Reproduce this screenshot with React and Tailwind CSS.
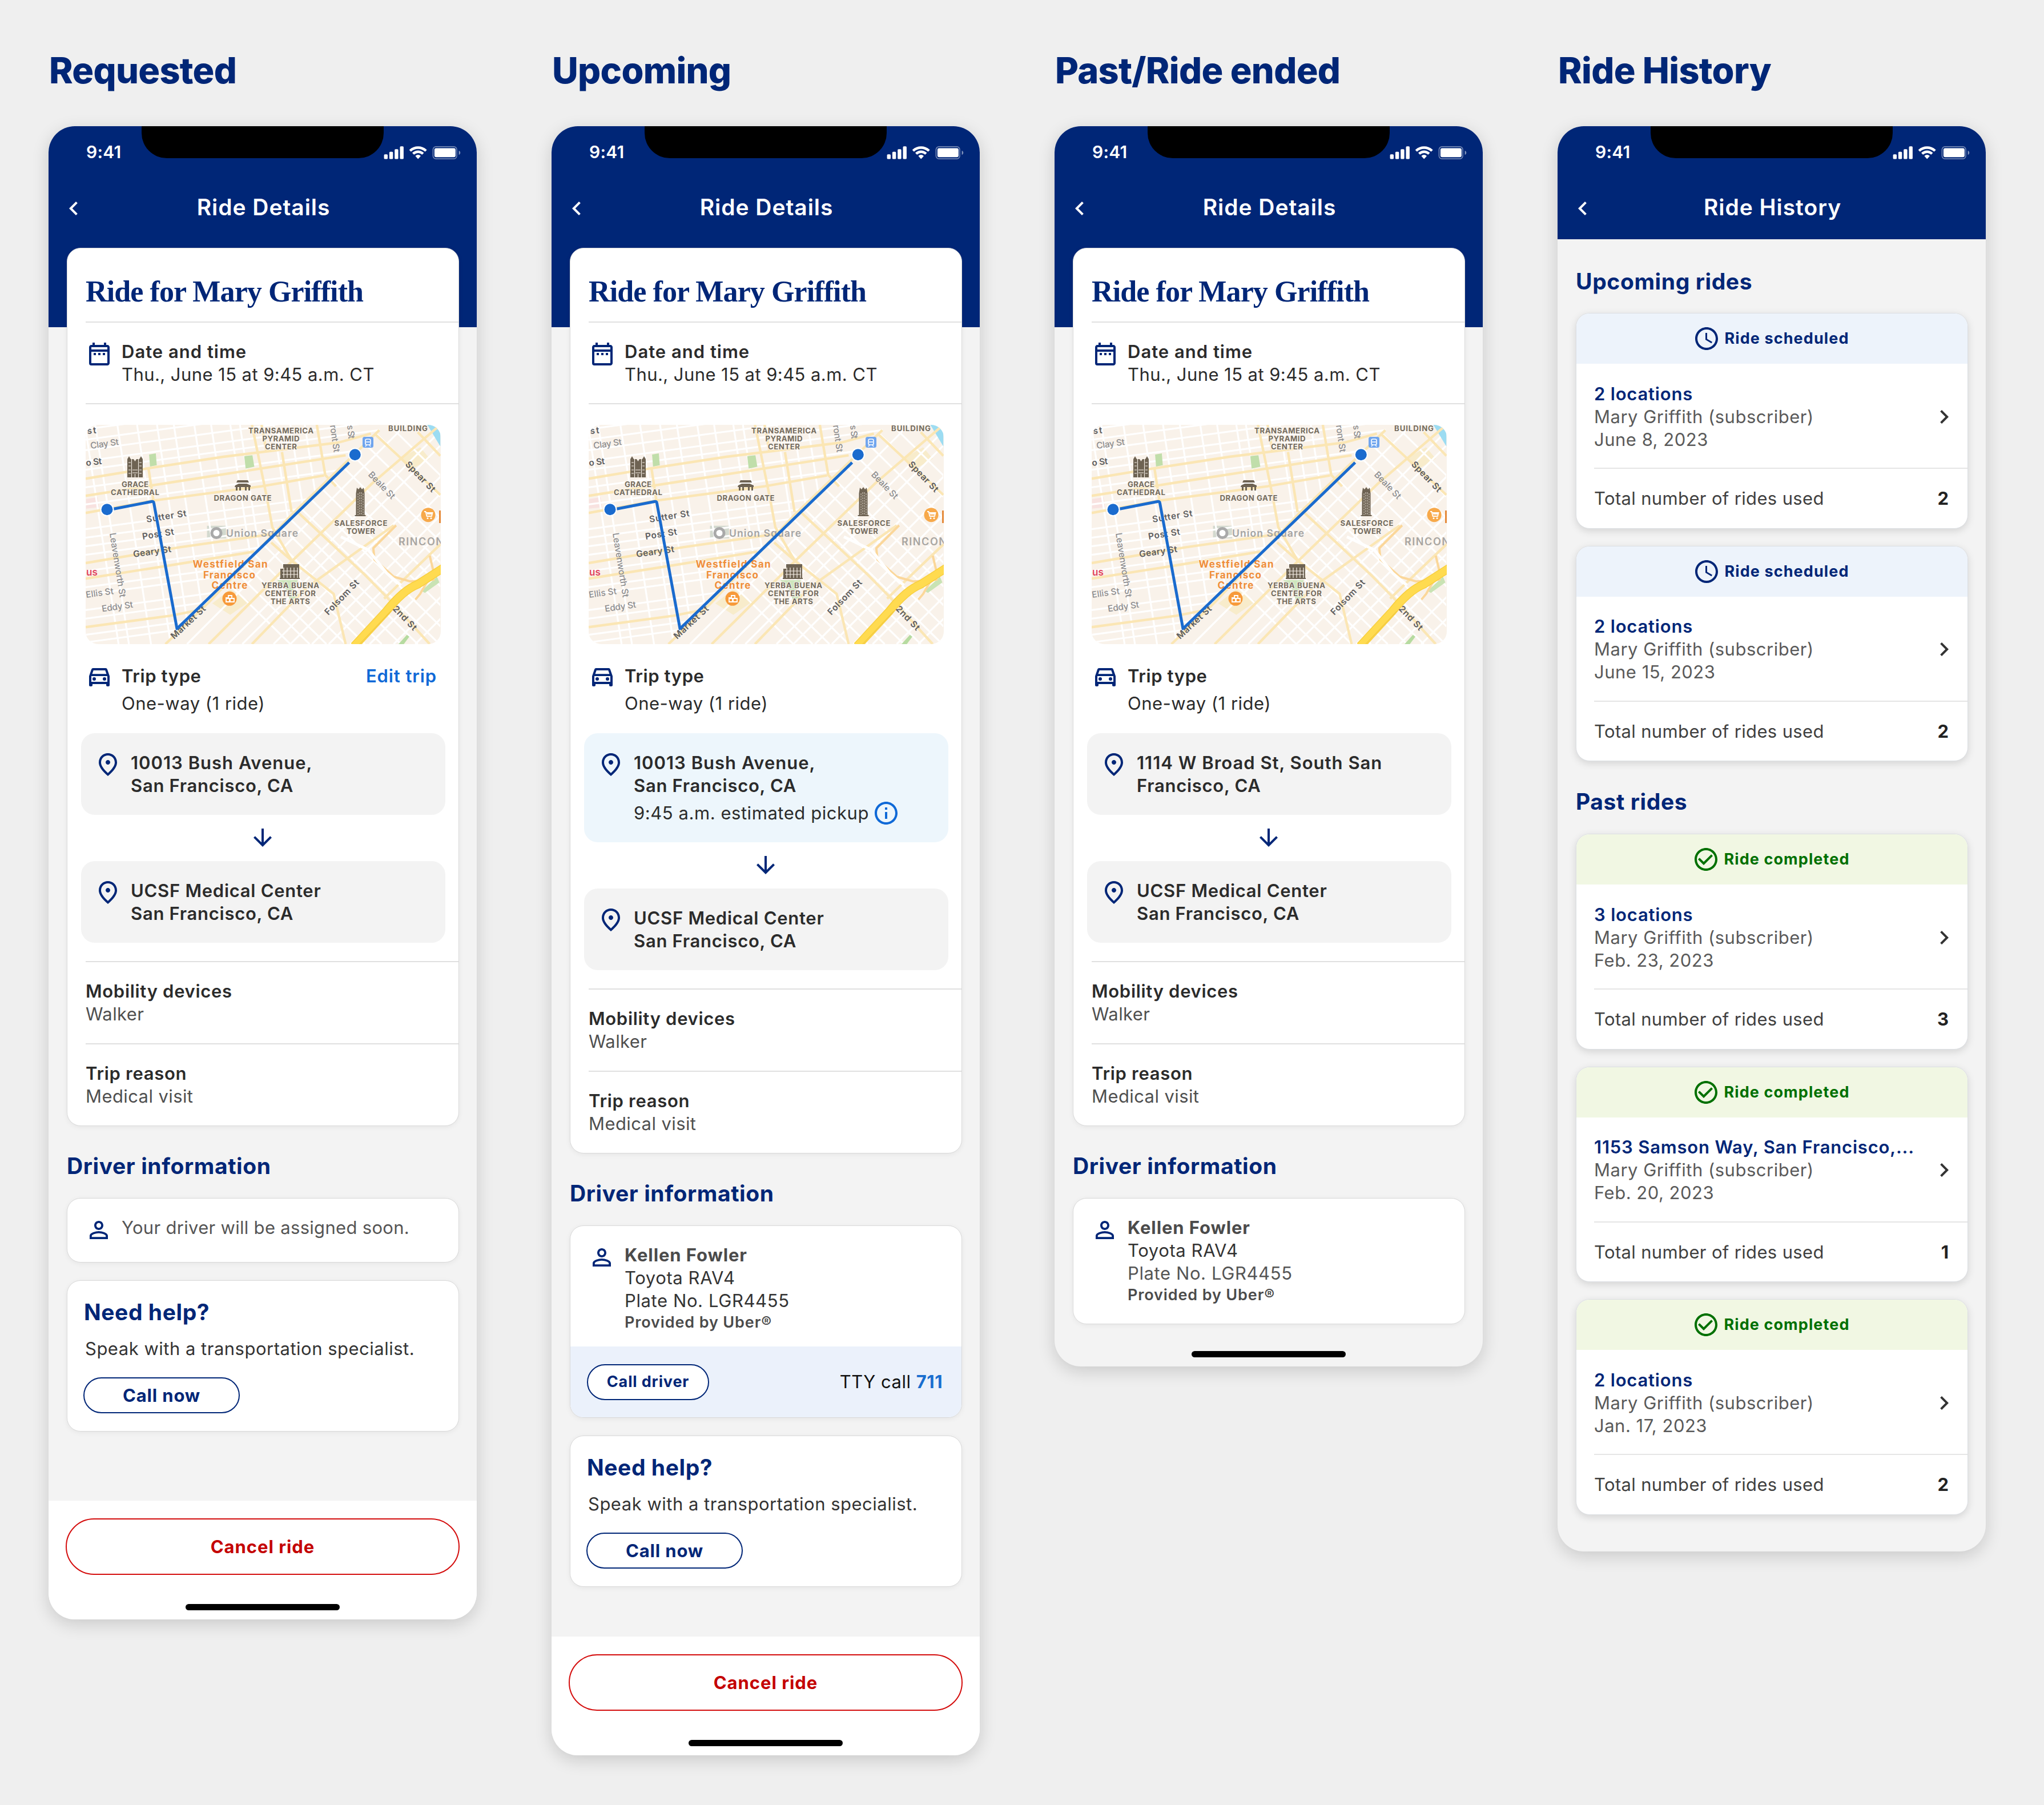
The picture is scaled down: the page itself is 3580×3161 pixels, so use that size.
import React from 'react';
import {
  MdArrowDownward,
  MdCheckCircleOutline,
  MdChevronLeft,
  MdChevronRight,
  MdOutlineDateRange,
  MdOutlineDirectionsCar,
  MdOutlineInfo,
  MdOutlinePlace,
  MdPersonOutline,
  MdSchedule,
} from 'react-icons/md';

const upcomingRides = [
  { title: '2 locations', date: 'June 8, 2023', used: 2 },
  { title: '2 locations', date: 'June 15, 2023', used: 2 },
];

const pastRides = [
  { title: '3 locations', date: 'Feb. 23, 2023', used: 3 },
  { title: '1153 Samson Way, San Francisco,...', date: 'Feb. 20, 2023', used: 1 },
  { title: '2 locations', date: 'Jan. 17, 2023', used: 2 },
];

// Streets share one coordinate space, scaled down by the group that draws them
const yellowStreets = [
  'M48 355L300 302L620 240L1100 165L1235 118',
  'M48 445L400 375L760 305L1130 232',
  'M48 535L330 470L780 395L1040 338',
  'M48 798L440 715L830 645',
  'M48 880L400 810L750 738',
  'M48 1135L400 1075L520 1045',
  'M310 305L330 470',
  'M740 72L800 440L825 610L905 785',
  'M780 72L800 210',
  'M865 215L905 530',
  'M1010 72L1045 335L1090 395',
  'M380 1224L560 1005L905 545L1270 100',
  'M560 1224L655 1105L905 790L1240 380L1524 72',
  'M740 1224L970 925L1330 600',
  'M820 690L905 785L1080 960L1130 1224',
  'M930 530L1210 860L1300 975L1480 1224',
  'M1250 118L1524 440',
  'M1430 110L1524 235',
  'M1290 985L1400 850L1524 700',
];

const whiteRows = [95, 150, 205, 262, 308, 400, 490, 620, 665, 710, 755, 840, 925, 965, 1045, 1090, 1175, 1215, 1290, 1350];
const whiteColumns = [45, 88, 180, 262, 345, 415, 500, 570, 650, 690, 830, 900, 960];
const southNorthEast = [470, 640, 700, 830, 900, 990, 1060, 1150, 1230, 1330, 1420, 1510, 1600, 1700];
const southSouthEast = [-330, -250, -180, -100, -20, 50, 130, 200, 290, 370, 460, 540, 640, 730, 830, 920, 1010];

const landmarkLabels = [
  { text: 'TRANSAMERICA', x: 342, y: 14.7, w: 114 },
  { text: 'PYRAMID', x: 342, y: 29.3, w: 65 },
  { text: 'CENTER', x: 342, y: 43.3, w: 56 },
  { text: 'BUILDING', x: 564.5, y: 10.7, w: 69 },
  { text: 'GRACE', x: 86.5, y: 108.7, w: 47 },
  { text: 'CATHEDRAL', x: 86.5, y: 122.7, w: 85 },
  { text: 'DRAGON GATE', x: 275, y: 132.7, w: 101 },
  { text: 'SALESFORCE', x: 482, y: 176.7, w: 93 },
  { text: 'TOWER', x: 482, y: 191, w: 50 },
  { text: 'YERBA BUENA', x: 358.5, y: 286.3, w: 101 },
  { text: 'CENTER FOR', x: 358.5, y: 300.3, w: 89 },
  { text: 'THE ARTS', x: 358.5, y: 314.3, w: 69 },
];

const streetLabels = [
  { text: 'st', x: 3, y: 16, r: -6, w: 16, dark: true },
  { text: 'Clay St', x: 9, y: 42, r: -8, w: 50 },
  { text: 'o St', x: 1, y: 72, r: -7, w: 28, dark: true },
  { text: 'Sutter St', x: 107, y: 171, r: -9, w: 71, dark: true },
  { text: 'Post St', x: 100, y: 201, r: -9, w: 56, dark: true },
  { text: 'Geary St', x: 84, y: 232, r: -8, w: 67, dark: true },
  { text: 'Ellis St', x: 1, y: 303, r: -8, w: 49 },
  { text: 'Eddy St', x: 29, y: 327.5, r: -8, w: 55 },
  { text: 'Leavenworth St', x: 42, y: 190, r: 81, w: 114 },
  { text: 'ront St', x: 428, y: 1, r: 82, w: 48 },
  { text: 's St', x: 458, y: 1, r: 84, w: 24 },
  { text: 'Beale St', x: 494, y: 88, r: 46, w: 60 },
  { text: 'Spear St', x: 559, y: 70, r: 46, w: 68, dark: true },
  { text: 'Folsom St', x: 425, y: 334, r: -46, w: 79, dark: true },
  { text: '2nd St', x: 537, y: 323, r: 46, w: 53, dark: true },
  { text: 'Market St', x: 155, y: 376, r: -43, w: 77, dark: true },
];

const StatusIcons = () => (
  <svg className="mt-[35px] w-[136px] h-[23px]" viewBox="0 0 136 23" fill="white">
    <rect x="0.6" y="14.2" width="6.4" height="8.4" rx="1.6" />
    <rect x="9.9" y="9.8" width="6.4" height="12.8" rx="1.6" />
    <rect x="19.2" y="5.2" width="6.4" height="17.4" rx="1.6" />
    <rect x="28.5" y="0.3" width="6.4" height="22.3" rx="1.6" />
    <g transform="translate(44.9 0.3) scale(1.785)">
      <path d="M8.57 2.47c2.49 0 4.88.92 6.68 2.57.14.13.35.13.49 0l1.3-1.27a.34.34 0 0 0 0-.49c-4.73-4.37-12.2-4.37-16.93 0a.34.34 0 0 0 0 .49l1.3 1.27c.13.13.35.13.48 0a9.9 9.9 0 0 1 6.68-2.57z" />
      <path d="M8.57 6.58c1.37 0 2.68.5 3.7 1.42.13.13.35.13.48 0l1.3-1.31a.36.36 0 0 0-.01-.51 8.02 8.02 0 0 0-10.93 0 .36.36 0 0 0 0 .51l1.29 1.31c.13.13.35.13.49 0a5.5 5.5 0 0 1 3.68-1.42z" />
      <path d="M11.09 9.48c0 .1-.04.2-.1.28l-2.18 2.45a.32.32 0 0 1-.48 0L6.15 9.76a.4.4 0 0 1 .01-.56 3.56 3.56 0 0 1 4.82 0c.07.07.11.17.11.28z" />
    </g>
    <rect x="86.4" y="0.9" width="41.6" height="21.2" rx="5.2" fill="none" stroke="white" strokeOpacity="0.45" strokeWidth="1.6" />
    <rect x="88.9" y="3.6" width="37" height="15.6" rx="3" />
    <path d="M131.6 7.8c2 .9 2.6 2.2 2.6 3.7s-.6 2.8-2.6 3.7z" fillOpacity="0.5" />
  </svg>
);

const TripMap = () => (
  <svg className="mt-9 w-[622px] h-96 rounded-[22px] font-['Inter',sans-serif]" viewBox="0 0 622 384">
    <defs>
      <clipPath id="northSide">
        <path d="M48 72H1290L380 1224H48z" />
      </clipPath>
      <clipPath id="southSide">
        <path d="M1290 72H1524V1224H380z" />
      </clipPath>
    </defs>
    <rect width="622" height="384" fill="#f9f2ea" />
    <g transform="scale(0.42088 0.33333) translate(-48 -72)" fill="none">
      <path d="M50 462L98 452L104 505L50 512z" fill="#f8e2e0" />
      <path d="M1355 250L1440 190L1480 250L1400 310z" fill="#f8eccb" />
      <path d="M575 1010L650 935L730 1000L650 1070z" fill="#f8eccb" />
      <path d="M553 602H632V668H553z" fill="#d3d9cf" />
      <g clipPath="url(#northSide)" stroke="#ffffff" strokeWidth="3.2">
        {whiteRows.map(y => <path key={y} d={`M48 ${y}L1290 ${y - 212}`} vectorEffect="non-scaling-stroke" />)}
        {whiteColumns.map(x => <path key={x} d={`M${x} 72L${x + 140} 1224`} vectorEffect="non-scaling-stroke" />)}
      </g>
      <g clipPath="url(#southSide)" stroke="#ffffff" strokeWidth="3.2">
        {southNorthEast.map(x => <path key={x} d={`M${x} 1224L${x + 910} 72`} vectorEffect="non-scaling-stroke" />)}
        {southSouthEast.map(x => <path key={x} d={`M${x + 300} 72L${x + 1230} 1224`} vectorEffect="non-scaling-stroke" />)}
      </g>
      <path d="M312 228L340 222L344 284L316 291z" fill="#c0deaa" />
      <path d="M708 236L742 232L750 292L714 302z" fill="#c0deaa" />
      <path d="M845 888H930V925H905L935 970L900 1000L880 930z" fill="#cde6bd" />
      <path d="M1445 945L1510 870L1520 900L1460 955z" fill="#c9e3b4" />
      <path d="M1350 1224L1385 1175L1395 1185L1372 1224z" fill="#b6dba0" />
      <path d="M1470 72H1524V185z" fill="#9cdcf2" />
      <g stroke="#fbe6b4" strokeWidth="4.4" strokeLinejoin="round">
        {yellowStreets.map(d => <path key={d} d={d} vectorEffect="non-scaling-stroke" />)}
      </g>
      <g stroke="#fbd79a" strokeWidth="4" strokeLinejoin="round">
        <path d="M1340 600L1245 720L1250 780L1330 870L1400 895L1500 885" vectorEffect="non-scaling-stroke" />
        <path d="M1480 760L1495 840L1440 960L1420 990" vectorEffect="non-scaling-stroke" />
      </g>
      <path d="M1110 660L1225 730L1300 850L1360 915" stroke="#ffffff" strokeWidth="5" vectorEffect="non-scaling-stroke" />
      <path d="M1165 1235L1300 1050Q1370 940 1430 910L1535 825" stroke="#f8cf3f" strokeWidth="15" vectorEffect="non-scaling-stroke" />
      <path d="M1165 1235L1300 1050Q1370 940 1430 910L1535 825" stroke="#ffdb50" strokeWidth="12" vectorEffect="non-scaling-stroke" />
      <path d="M1180 1235L1318 1050" stroke="#e9bd3a" strokeWidth="1" vectorEffect="non-scaling-stroke" />
    </g>

    {/* Landmarks */}
    <g fill="#6e6353">
      <path d="M73 60l3-5 3 5h5l2.500 4 2.500-4h5l3-5 3 5v32H73z" />
      <path d="M266 97h18l2 4h-22zM262 106l6-3h14l7 3v3h-28zM263 108h3v7h-3zM269 108h3v7h-3zM279 108h3v7h-3zM285 108h3v7h-3z" />
      <path d="M475 110l3 3 3-4 3 4 3-3 1.500 10v38h2v2h-19v-2h2v-38z" />
      <path d="M346 244h28v24h1v2h-35v-2h1v-16h5z" />
    </g>
    <path d="M75 66h4M75 72h4M75 79h4M75 85h4M94 66h4M94 72h4M94 79h4M94 85h4M82 79h9M82 84h9M86.500 86v6M80.500 60v32M92.500 60v32" stroke="#f9f2ea" strokeWidth="1.100" />
    <path d="M477 120v38M480 118v40M483 118v40M486 120v38" stroke="#f9f2ea" strokeWidth="0.800" strokeDasharray="3 1.500" />
    <path d="M344 256h28M344 262h28M347 250v18M353 250v18M359 250v18M365 250v18M371 250v18" stroke="#f9f2ea" strokeWidth="1.200" />

    <g fontSize="13.200" fontWeight="700" fill="#746b5d" stroke="#fbf6f0" strokeWidth="2" paintOrder="stroke" textAnchor="middle">
      {landmarkLabels.map(l => (
        <text key={l.text} x={l.x} y={l.y} textLength={l.w}>{l.text}</text>
      ))}
    </g>
    <g fontSize="15.500">
      {streetLabels.map(l => (
        <text
          key={l.text}
          transform={`translate(${l.x} ${l.y}) rotate(${l.r})`}
          textLength={l.w}
          fill={l.dark ? '#5c5c5e' : '#8d8d8f'}
          fontWeight={l.dark ? 600 : 500}
        >
          {l.text}
        </text>
      ))}
    </g>
    <g fontWeight="600">
      <circle cx="229" cy="189.500" r="8" fill="#ffffff" stroke="#a9a9a9" strokeWidth="5" />
      <circle cx="229" cy="189.500" r="3.500" fill="#ffffff" />
      <text x="246" y="195.500" fontSize="17.500" fill="#a3a3a3" textLength="126">Union Square</text>
      <text x="548" y="210.500" fontSize="18" fill="#a8a5a1" textLength="79">RINCON</text>
      <text x="1" y="264" fontSize="17" fill="#e2455f">us</text>
      <g fontSize="17" fontWeight="700" fill="#ef8d38" stroke="#fbf6f0" strokeWidth="2" paintOrder="stroke" textAnchor="middle">
        <text x="253" y="250.300" textLength="131">Westfield San</text>
        <text x="251.500" y="269.300" textLength="91">Francisco</text>
        <text x="252" y="287" textLength="63">Centre</text>
      </g>
    </g>
    <circle cx="252" cy="304.300" r="12.500" fill="#f79a3a" />
    <path d="M245 303h5v-4h6v4M246 304h6v6h-6zM253 304h7v6h-7z" fill="none" stroke="white" strokeWidth="1.800" />
    <circle cx="600" cy="157.700" r="12.500" fill="#f7a94a" />
    <path d="M593 152h2.500l2 8h8.500l1.500-6h-11.500M598 156h9" fill="none" stroke="white" strokeWidth="1.800" />
    <circle cx="599" cy="163.500" r="1.500" fill="white" />
    <circle cx="605" cy="163.500" r="1.500" fill="white" />
    <rect x="485" y="21" width="19" height="19" rx="3.500" fill="#70a5ee" />
    <rect x="490" y="25" width="9" height="10" rx="2.500" fill="none" stroke="white" strokeWidth="1.600" />
    <path d="M491 30h7M490 38l2-3M499 38l-2-3" stroke="white" strokeWidth="1.400" />
    <path d="M619 150h3v22h-3z" fill="#e58a3a" />

    {/* Route */}
    <path d="M49 147.300L116 134.300Q119 133.800 119.500 137L160 357L461.500 66" fill="none" stroke="#1a6bce" strokeWidth="5" strokeLinejoin="round" />
    <circle cx="37.500" cy="148.300" r="11" fill="#1a6bce" stroke="white" strokeWidth="2" />
    <circle cx="471.800" cy="52.300" r="11" fill="#1a6bce" stroke="white" strokeWidth="2" />
  </svg>
);

const PhoneHeader = ({ title, tall }) => (
  <div className={`bg-[#002677] text-white ${tall ? 'h-[352px]' : 'h-[198px]'}`}>
    <div className="flex h-[118px]">
      <p className="w-[163px] pl-[66px] pt-[27px] text-[30px] leading-9 font-semibold tracking-[0.2px]">9:41</p>
      <div className="w-[424px] h-14 bg-black rounded-b-[44px]" />
      <StatusIcons />
    </div>
    <div className="grid grid-cols-[48px_1fr_48px] pl-5 pr-[17px]">
      <MdChevronLeft className="size-12 mt-0.5" />
      <h2 className="text-center text-[39px] leading-[48px] font-semibold tracking-[0.95px]">{title}</h2>
    </div>
  </div>
);

const Phone = ({ heading, title, tall, children }) => (
  <section className="w-[750px]">
    <h1 className="mb-[60px] pl-px text-[63px] leading-[76px] font-extrabold tracking-[-0.7px] text-[#002677]">{heading}</h1>
    <div className="rounded-[46px] overflow-hidden bg-[#f3f3f3] shadow-[0_8px_30px_rgba(0,0,0,0.16)]">
      <PhoneHeader title={title} tall={tall} />
      {children}
    </div>
  </section>
);

const Card = ({ className = '', children }) => (
  <div className={`ml-8 mr-[31px] bg-white border border-[#d9d9d9] rounded-3xl overflow-hidden shadow-[0_2px_10px_rgba(0,0,0,0.06)] ${className}`}>
    {children}
  </div>
);

const Location = ({ lines, pickup }) => (
  <div className={`flex gap-4 w-[638px] -ml-2 pl-[23px] pt-[31px] rounded-3xl ${pickup ? 'h-[191px] bg-[#edf6fc]' : 'h-[143px] bg-[#f3f3f3]'}`}>
    <MdOutlinePlace className="size-12 text-[#002677]" />
    <div className="pt-px">
      {lines.map(line => (
        <p key={line} className={`font-semibold ${/^\d/.test(line) ? 'tracking-[1px]' : 'tracking-[0.72px]'}`}>{line}</p>
      ))}
      {pickup && (
        <p className="flex items-center gap-1.5 h-10 mt-2 tracking-[0.55px]">
          {pickup}
          <MdOutlineInfo className="size-12 text-[#0f69d7]" />
        </p>
      )}
    </div>
  </div>
);

const RideCard = ({ from, pickup, editable }) => (
  <Card className="-mt-[139px] relative text-[31px] leading-10 text-[#2b2b2b]">
    <div className="ml-8">
      <h3 className="h-[130px] pt-[46px] border-b-2 border-[#e0e0e0] font-['Liberation_Serif',serif] text-[52px] leading-[60px] font-bold tracking-[-0.9px] text-[#002677]">
        Ride for Mary Griffith
      </h3>
      <div className="flex gap-[15px] h-[143px] pt-[31px] border-b-2 border-[#e0e0e0]">
        <MdOutlineDateRange className="size-12 text-[#002677]" />
        <div>
          <p className="font-semibold tracking-[1px]">Date and time</p>
          <p className="tracking-[0.43px]">Thu., June 15 at 9:45 a.m. CT</p>
        </div>
      </div>
      <TripMap />
      <div className="flex gap-[15px] h-[156px] pt-8 pr-[38px]">
        <MdOutlineDirectionsCar className="size-12 text-[#002677]" />
        <div className="flex-1 pt-1">
          <p className="mb-2 font-semibold tracking-[0.6px]">Trip type</p>
          <p className="tracking-[0.5px]">One-way (1 ride)</p>
        </div>
        {editable && <a className="pt-1 font-semibold tracking-[0.9px] text-[#0f69d7]">Edit trip</a>}
      </div>
      <Location lines={from} pickup={pickup} />
      <div className="flex justify-center w-[620px] h-[81px] pt-4">
        <MdArrowDownward className="size-12 text-[#002677]" />
      </div>
      <Location lines={['UCSF Medical Center', 'San Francisco, CA']} />
      <div className="h-36 mt-8 pt-[31px] border-t-2 border-[#e0e0e0]">
        <p className="font-semibold tracking-[0.7px]">Mobility devices</p>
        <p className="tracking-[0.4px] text-[#4f4f4f]">Walker</p>
      </div>
      <div className="h-36 pt-[31px] border-t-2 border-[#e0e0e0]">
        <p className="font-semibold tracking-[0.7px]">Trip reason</p>
        <p className="tracking-[0.4px] text-[#4f4f4f]">Medical visit</p>
      </div>
    </div>
  </Card>
);

const SectionTitle = ({ className, children }) => (
  <h3 className={`pl-8 text-[39px] leading-[48px] font-bold tracking-[0.6px] text-[#002677] ${className}`}>{children}</h3>
);

const DriverDetails = ({ mutedPlate }) => (
  <div className="flex gap-4 pl-[31px] pt-[31px] text-[31px] leading-10 text-[#333]">
    <MdPersonOutline className="size-12 text-[#002677]" />
    <div>
      <p className="font-bold tracking-[0.9px] text-[#4b4b4b]">Kellen Fowler</p>
      <p className="tracking-[0.6px]">Toyota RAV4</p>
      <p className={`tracking-[0.6px] ${mutedPlate ? 'text-[#555]' : ''}`}>Plate No. LGR4455</p>
      <p className="text-[27px] leading-9 font-semibold tracking-[0.87px] text-[#4b4b4b]">Provided by Uber®</p>
    </div>
  </div>
);

const HelpCard = () => (
  <Card className="mt-[31px] h-[265px] pl-[29px] pt-[31px]">
    <h4 className="text-[39px] leading-[48px] font-bold tracking-[0.57px] text-[#002677]">Need help?</h4>
    <p className="mt-5 ml-0.5 text-[31px] leading-10 tracking-[0.5px] text-[#333]">Speak with a transportation specialist.</p>
    <button className="mt-[30px] -ml-px w-[274px] h-[63px] rounded-full border-2 border-[#002677] text-[31px] leading-10 font-bold tracking-[0.86px] text-[#002677]">
      Call now
    </button>
  </Card>
);

const HomeBar = ({ className }) => <div className={`w-[270px] h-[11px] mx-auto rounded-full bg-black ${className}`} />;

const CancelBar = () => (
  <div className="h-52 pt-[31px] bg-white">
    <button className="block mx-auto w-[690px] h-[99px] rounded-full border-2 border-[#d40d0d] text-[31px] leading-10 font-bold tracking-[0.97px] text-[#c40000]">
      Cancel ride
    </button>
    <HomeBar className="mt-[51px]" />
  </div>
);

const HistoryCard = ({ ride, completed }) => (
  <div className="h-[377.5px] ml-8 mr-[31px] bg-white border border-[#dcdfe3] rounded-3xl overflow-hidden shadow-[0_4px_14px_rgba(0,0,0,0.13)] text-[31px] leading-10">
    <div className={`flex items-center justify-center gap-[7px] h-[88px] pr-[3px] text-[27px] font-bold tracking-[1.1px] ${completed ? 'bg-[#f1f7e3] text-[#007000]' : 'bg-[#edf3fb] text-[#002677]'}`}>
      {completed ? <MdCheckCircleOutline className="size-12" /> : <MdSchedule className="size-12" />}
      <span>{completed ? 'Ride completed' : 'Ride scheduled'}</span>
    </div>
    <div className="ml-[31px]">
      <div className="flex items-center justify-between h-[184px] pt-[3px] pr-[17px] border-b-2 border-[#e5e5e5]">
        <div className="text-[#5a5a5a]">
          <p className="font-semibold tracking-[0.8px] text-[#002677]">{ride.title}</p>
          <p className="tracking-[0.5px]">Mary Griffith (subscriber)</p>
          <p className="tracking-[0.5px]">{ride.date}</p>
        </div>
        <MdChevronRight className="size-12 text-[#333]" />
      </div>
      <div className="flex justify-between pt-8 pr-[33px] text-[#404040]">
        <span className="tracking-[0.35px]">Total number of rides used</span>
        <span className="font-bold text-[#222]">{ride.used}</span>
      </div>
    </div>
  </div>
);

const App = () => {
  return (
    <div className="flex items-start gap-[131px] w-[3580px] h-[3161px] pl-[85px] pt-[85px] overflow-hidden bg-[#efefef] font-['Inter',sans-serif]">
      <Phone heading="Requested" title="Ride Details" tall>
        <RideCard from={['10013 Bush Avenue,', 'San Francisco, CA']} editable />
        <SectionTitle className="pt-[46px] pb-8">Driver information</SectionTitle>
        <Card className="flex gap-4 h-[113px] pl-[31px] pt-[31px]">
          <MdPersonOutline className="size-12 text-[#002677]" />
          <p className="text-[31px] leading-10 tracking-[0.3px] text-[#555]">Your driver will be assigned soon.</p>
        </Card>
        <HelpCard />
        <div className="h-[121px]" />
        <CancelBar />
      </Phone>

      <Phone heading="Upcoming" title="Ride Details" tall>
        <RideCard from={['10013 Bush Avenue,', 'San Francisco, CA']} pickup="9:45 a.m. estimated pickup" />
        <SectionTitle className="pt-[46px] pb-8">Driver information</SectionTitle>
        <Card className="h-[337px]">
          <div className="h-[211px]">
            <DriverDetails />
          </div>
          <div className="flex items-center justify-between h-[124px] pl-[29px] pr-[33px] bg-[#ebf1fb]">
            <button className="w-[214px] h-[63px] rounded-full border-2 border-[#002677] bg-white text-[27px] font-bold tracking-[0.86px] text-[#002677]">
              Call driver
            </button>
            <p className="text-[31px] leading-10 tracking-[0.5px] text-[#111]">
              TTY call <span className="font-bold text-[#196ecf]">711</span>
            </p>
          </div>
        </Card>
        <HelpCard />
        <div className="h-[87px]" />
        <CancelBar />
      </Phone>

      <Phone heading="Past/Ride ended" title="Ride Details" tall>
        <RideCard from={['1114 W Broad St, South San', 'Francisco, CA']} />
        <SectionTitle className="pt-[46px] pb-8">Driver information</SectionTitle>
        <Card className="h-[221px]">
          <DriverDetails mutedPlate />
        </Card>
        <HomeBar className="mt-[47px] mb-4" />
      </Phone>

      <Phone heading="Ride History" title="Ride History">
        <SectionTitle className="pt-[50px] pb-[31px]">Upcoming rides</SectionTitle>
        <div className="flex flex-col gap-[30px]">
          {upcomingRides.map((ride, i) => <HistoryCard key={i} ride={ride} />)}
        </div>
        <SectionTitle className="pt-[47px] pb-8">Past rides</SectionTitle>
        <div className="flex flex-col gap-[30px] pb-16">
          {pastRides.map((ride, i) => <HistoryCard key={i} ride={ride} completed />)}
        </div>
      </Phone>
    </div>
  );
};

export default App;
